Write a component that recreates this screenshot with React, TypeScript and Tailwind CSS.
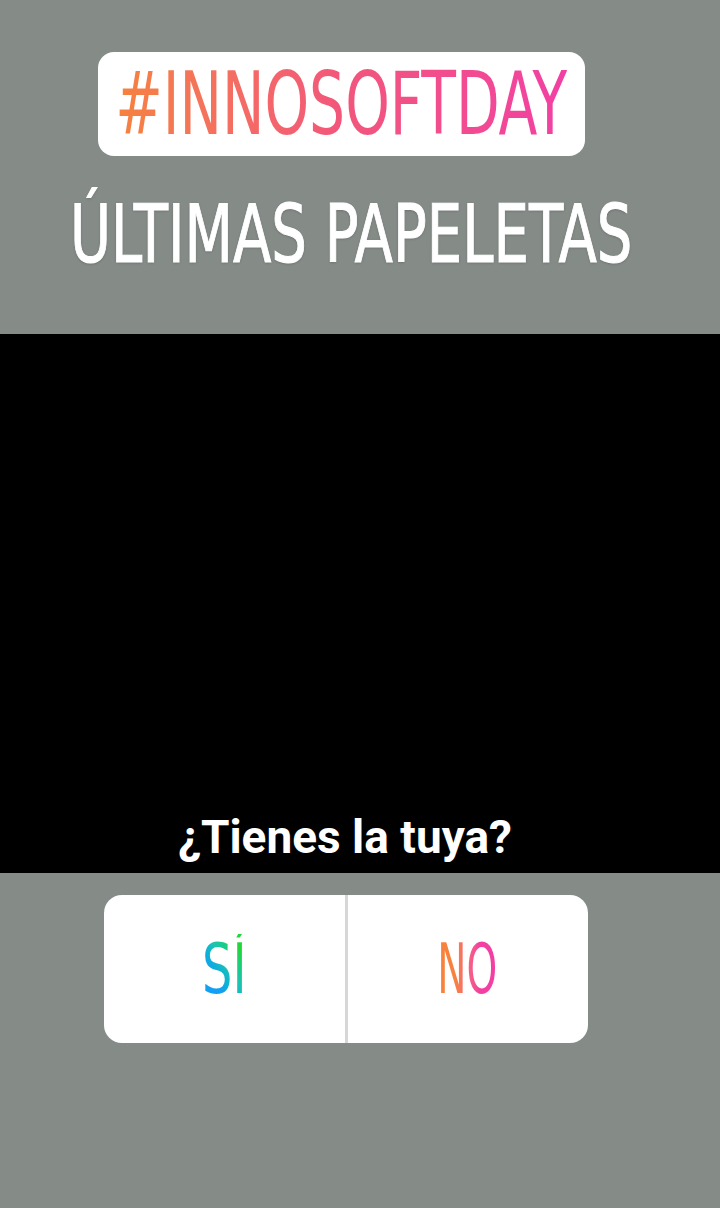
const narrow = "font-['Liberation_Sans_Narrow','DejaVu_Sans_Condensed',sans-serif]";

const App = () => {
  return (
    <div className="w-[720px] h-[1208px] bg-[#858c87] flex flex-col overflow-hidden">
      {/* top stickers */}
      <div className="h-[334px] flex flex-col items-center pt-[52px] pr-[30px]">
        <div className="w-[487px] h-[104px] mr-[7px] bg-white rounded-[16px] flex items-center justify-center">
          <span
            className={`${narrow} text-[88px] leading-none whitespace-nowrap scale-x-[0.717] bg-linear-to-r from-[#f6823d] via-[#f2567a] to-[#f23fa3] bg-clip-text text-transparent`}
          >
            #INNOSOFTDAY
          </span>
        </div>
        <div
          className={`${narrow} mt-[38px] ml-[13px] text-[81px] leading-none whitespace-nowrap text-white scale-x-[0.77] [-webkit-text-stroke:1px_white] [text-shadow:0_1px_3px_rgba(0,0,0,0.25)]`}
        >
          ÚLTIMAS PAPELETAS
        </div>
      </div>

      {/* photo area */}
      <div className="h-[539px] bg-black flex flex-col justify-end items-center pr-[30px] pb-[13px]">
        <div className="font-['Roboto',sans-serif] font-bold text-[46px] leading-none text-white whitespace-nowrap">
          ¿Tienes la tuya?
        </div>
      </div>

      {/* poll */}
      <div className="flex justify-center pr-[28px] mt-[22px]">
        <div className="w-[484px] h-[148px] bg-white rounded-[18px] flex overflow-hidden">
          <div className="flex-1 flex items-center justify-center">
            <span
              className={`${narrow} text-[70px] leading-none scale-x-[0.76] bg-linear-to-tr from-[#139ff2] from-30% via-[#1cc2b4] via-55% to-[#22d63a] to-80% bg-clip-text text-transparent`}
            >
              SÍ
            </span>
          </div>
          <div className="w-[3px] bg-[#d7d7d7]" />
          <div className="flex-1 flex items-center justify-center">
            <span
              className={`${narrow} text-[70px] leading-none scale-x-[0.62] bg-linear-to-r from-[#f7813d] from-30% to-[#f43fa2] to-70% bg-clip-text text-transparent`}
            >
              NO
            </span>
          </div>
        </div>
      </div>
    </div>
  );
};

export default App;
